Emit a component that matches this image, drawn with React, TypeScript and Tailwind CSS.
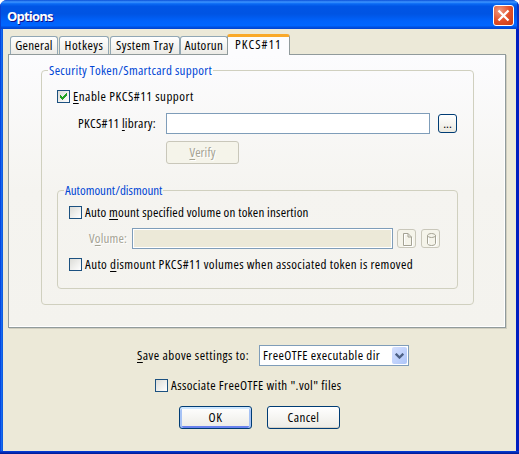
import type { ReactNode } from "react";

function Checkbox({ checked = false }: { checked?: boolean }) {
  return (
    <span className="flex size-[13px] shrink-0 items-center justify-center border border-[#1c5180] bg-linear-to-br from-[#dcdcd7] to-white">
      {checked && (
        <svg width="7" height="7" viewBox="0 0 7 7" shapeRendering="crispEdges">
          <path d="M0 2h1v1h1v1h1v-1h1v-1h1v-1h1v-1h1v3h-1v1h-1v1h-1v1h-1v1h-1v-1h-1v-1h-1z" fill="#21a121" />
        </svg>
      )}
    </span>
  );
}

function Label({ className = "", children }: { className?: string; children: ReactNode }) {
  return <span className={`block shrink-0 whitespace-nowrap leading-[15px] ${className}`}>{children}</span>;
}

function Key({ children }: { children: string }) {
  return <span className="underline decoration-1 underline-offset-[2px]">{children}</span>;
}

function Tab({ className, children }: { className: string; children: string }) {
  return (
    <div className={`flex h-[18px] items-center justify-center whitespace-nowrap rounded-t-[3px] border border-b-0 border-[#91a7b4] bg-linear-to-b from-white to-[#ecebe6] ${className}`}>
      {children}
    </div>
  );
}

function IconButton({ children }: { children: ReactNode }) {
  return (
    <button className="flex size-[19px] shrink-0 items-start rounded-[3px] border border-[#c9c7ba] bg-[#f5f4ea] pl-[5px] pt-[3px] text-[#a5a394]">
      {children}
    </button>
  );
}

export default function App() {
  return (
    <div className="flex h-[454px] w-[519px] flex-col overflow-hidden bg-white font-['Open_Sans','Roboto',sans-serif] text-[13px] text-black [font-stretch:75%]">
      <div className="flex h-[454px] flex-col overflow-hidden rounded-t-[7px] bg-[#0831d9]">
        <header className="flex h-[29px] shrink-0 items-center justify-between bg-[linear-gradient(180deg,#0a4fd8_0%,#3d95ff_7%,#0a6af4_13%,#0055e5_22%,#0054e3_48%,#0062fb_72%,#0066ff_88%,#0050e0_94%,#0043cf_100%)] pl-[7px] pr-[5px] shadow-[inset_1px_0_#0a3fd0,inset_-2px_0_#0831c4]">
          <h1 className="pt-[3px] text-[13px] font-bold leading-[18px] tracking-[-0.8px] text-white [font-stretch:100%] [text-shadow:1px_1px_#0f1089]">Options</h1>
          <button className="mt-[2px] flex size-[21px] items-center justify-center rounded-[3px] border border-white bg-[radial-gradient(circle_at_30%_25%,#f09a80,#e3512b_50%,#c93a10)]">
            <svg width="13" height="13" viewBox="0 0 13 13" stroke="#fff" strokeWidth="2.3">
              <path d="M1.5 1.5l10 10M11.5 1.5l-10 10" />
            </svg>
          </button>
        </header>

        <main className="h-[422px] shrink-0 border-r-[3px] border-r-[#001dc0] bg-linear-to-r from-[#0831d9] via-[#166aee] to-[#0855dd] bg-[length:3px_100%] bg-no-repeat pl-[3px]">
          <div className="flex h-full flex-col bg-[#ece9d8] pl-[5px]">
            <nav className="relative z-10 -mb-px flex h-[26px] shrink-0 items-end pl-[2px]">
              <Tab className="mb-px w-[48px] tracking-[0.3px]">General</Tab>
              <Tab className="mb-px ml-px w-[50px] tracking-[0.5px]">Hotkeys</Tab>
              <Tab className="mb-px ml-px w-[70px] tracking-[0.45px]">System Tray</Tab>
              <Tab className="mb-px w-[48px] tracking-[0.3px]">Autorun</Tab>
              <div className="-ml-px h-[21px] w-[63px] rounded-t-[3px] border-x border-t-[3px] border-x-[#919b9c] border-t-[#f9a92b] bg-[#fcfcfe] pl-[7px] leading-[15px] tracking-[1px]">PKCS#11</div>
            </nav>

            <section className="h-[274px] w-[498px] shrink-0 border border-[#919b9c] bg-linear-to-b from-[#fcfcfe] via-[#f5f4f0] to-[#f4f3ee] pl-[32px] pt-[15px] shadow-[inset_-1px_-1px_#fff,1px_1px_#d0cebf]">
              <div className="h-[235px] w-[433px] rounded-[4px] border border-[#d0d0bf]">
                <div className="-mt-[8px] ml-[6px] flex h-[15px]">
                  <Label className="bg-[#fcfcfd] px-px tracking-[0.3px] text-[#0046d5]">Security Token/Smartcard support</Label>
                </div>
                <div className="ml-[15px] mt-[12px] flex h-[13px] items-center">
                  <Checkbox checked />
                  <Label className="ml-[3px] tracking-[0.5px]"><Key>E</Key>nable PKCS#11 support</Label>
                </div>
                <div className="ml-[36px] mt-[10px] flex h-[21px] items-center">
                  <Label className="w-[88px] tracking-[0.25px]">PKCS#11 <Key>l</Key>ibrary:</Label>
                  <div className="h-[21px] w-[264px] border border-[#7f9db9] bg-white" />
                  <button className="ml-[8px] size-[19px] rounded-[3px] border border-[#003c74] bg-linear-to-b from-white to-[#ebe9df] leading-[17px]">...</button>
                </div>
                <button className="ml-[124px] mt-[7px] block h-[23px] w-[73px] rounded-[3px] border border-[#c9c7ba] bg-[#f5f4ea] tracking-[0.1px] text-[#a5a394] [text-shadow:1px_1px_#fff]"><Key>V</Key>erify</button>

                <div className="ml-[15px] mt-[26px] h-[99px] w-[401px] rounded-[4px] border border-[#d0d0bf]">
                  <div className="-mt-[8px] ml-[6px] flex h-[15px]">
                    <Label className="bg-[#f5f4f0] px-px text-[#0046d5]">Automount/dismount</Label>
                  </div>
                  <div className="ml-[11px] mt-[8px] flex h-[13px] items-center">
                    <Checkbox />
                    <Label className="ml-[3px] tracking-[0.2px]">Auto <Key>m</Key>ount specified volume on token insertion</Label>
                  </div>
                  <div className="ml-[31px] mt-[9px] flex h-[21px] items-center">
                    <Label className="w-[43px] tracking-[0.15px] text-[#a5a394] [text-shadow:1px_1px_#fff]">V<Key>o</Key>lume:</Label>
                    <div className="h-[21px] w-[261px] border border-[#7f9db9] bg-[#ece9d8] shadow-[inset_0_0_0_1px_#fff]" />
                    <div className="ml-[4px] flex gap-[5px]">
                      <IconButton>
                        <svg width="11" height="14" viewBox="0 0 11 14" fill="none">
                          <path d="M1.5 1.5h4.500l3.500 3.500v8.500h-8z" stroke="#fff" />
                          <path d="M.5 .5h4.500l3.500 3.500v8.500H.5zM5 .5v3.500h3.500" stroke="currentColor" />
                        </svg>
                      </IconButton>
                      <IconButton>
                        <svg width="11" height="14" viewBox="0 0 11 14" fill="none">
                          <path d="M1.5 3.5v8c0 1 2 2 4 2s4-1 4-2v-8" stroke="#fff" />
                          <path d="M.5 2.5C.5 1.500 2.500 .5 4.500 .5s4 1 4 2-2 2-4 2-4-1-4-2zv8c0 1 2 2 4 2s4-1 4-2v-8" stroke="currentColor" />
                        </svg>
                      </IconButton>
                    </div>
                  </div>
                  <div className="ml-[11px] mt-[9px] flex h-[13px] items-center">
                    <Checkbox />
                    <Label className="ml-[3px] tracking-[0.4px]">Auto <Key>d</Key>ismount PKCS#11 volumes when associated token is removed</Label>
                  </div>
                </div>
              </div>
            </section>

            <div className="ml-[129px] mt-[17px] flex h-[21px] shrink-0 items-center">
              <Label className="w-[122px] tracking-[0.47px]"><Key>S</Key>ave above settings to:</Label>
              <div className="flex h-[21px] w-[150px] items-center justify-between border border-[#7f9db9] bg-white pl-[3px] pr-px">
                <Label className="tracking-[0.42px]">FreeOTFE executable dir</Label>
                <span className="flex h-[17px] w-[15px] items-center justify-center rounded-[2px] bg-linear-to-br from-[#d5e0ff] to-[#adc5f8]">
                  <svg width="9" height="6" viewBox="0 0 9 6" fill="none" stroke="#4d6185" strokeWidth="2.3">
                    <path d="M.7 .7l3.8 3.8L8.300 .7" />
                  </svg>
                </span>
              </div>
            </div>
            <div className="ml-[147px] mt-[13px] flex h-[13px] shrink-0 items-center">
              <Checkbox />
              <Label className="ml-[3px] tracking-[0.4px]">Associate FreeOTFE with ".vol" files</Label>
            </div>
            <footer className="ml-[171px] mt-[14px] flex gap-[15px]">
              <button className="h-[23px] w-[73px] rounded-[3px] border border-[#003c74] bg-linear-to-b from-white to-[#ecebe5] tracking-[0.6px] shadow-[inset_0_2px_#cee7ff,inset_2px_0_#a6c2f5,inset_-2px_0_#a6c2f5,inset_0_-2px_#6982ee]">OK</button>
              <button className="h-[23px] w-[73px] rounded-[3px] border border-[#003c74] bg-linear-to-b from-white to-[#ecebe5] tracking-[0.4px] shadow-[inset_0_-1px_#d6d0c5]">Cancel</button>
            </footer>
          </div>
        </main>
        <div className="h-[3px] shrink-0 bg-linear-to-b from-[#0840dd] to-[#001590]" />
      </div>
    </div>
  );
}
